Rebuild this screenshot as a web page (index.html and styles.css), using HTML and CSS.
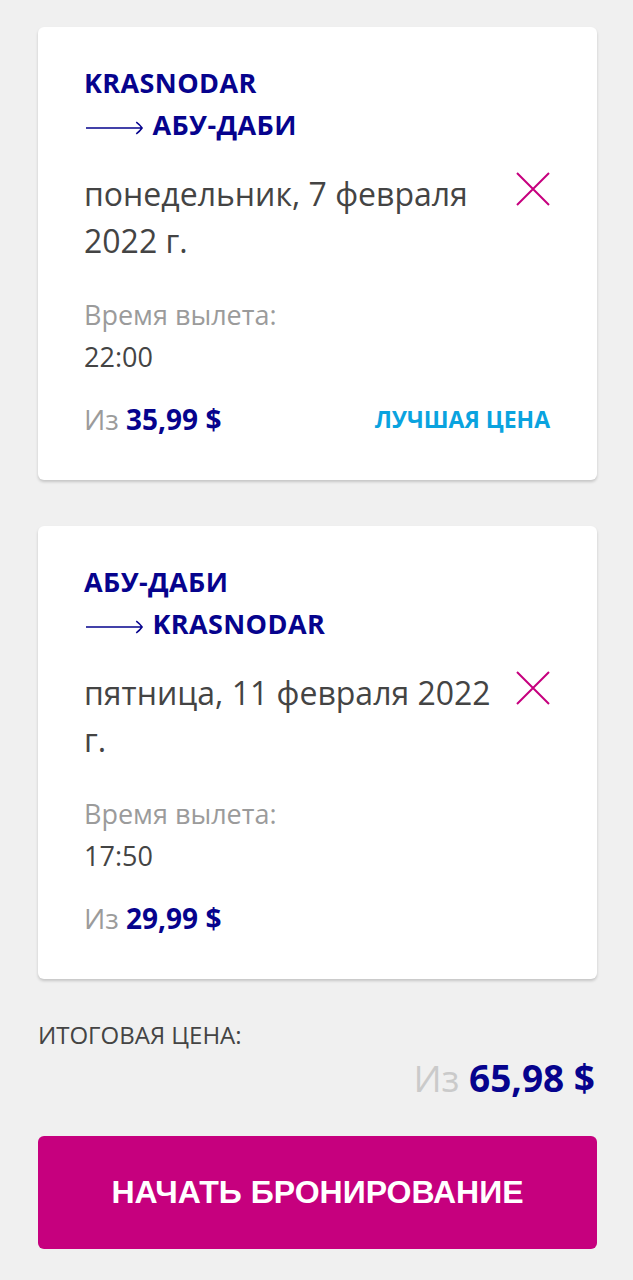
FILE: index.html
```html
<!DOCTYPE html>
<html lang="ru">
<head>
    <meta charset="UTF-8" />
    <meta name="viewport" content="width=device-width, initial-scale=1" />
    <title>Выбранные рейсы</title>
    <link rel="stylesheet" href="styles.css">
</head>
<body>
    <div class="flights">
        <div class="card">
            <div class="route">
                <div>KRASNODAR</div>
                <div><svg class="arrow" viewBox="0 0 60 16"><path d="M0 8 H58 M52 2 Q56 5 58 8 Q56 11 52 14" /></svg> АБУ-ДАБИ</div>
            </div>
            <div class="date-row">
                <div class="date">понедельник, 7 февраля 2022 г.</div>
                <svg class="remove" viewBox="0 0 34 34"><path d="M1 1 L33 33 M33 1 L1 33" /></svg>
            </div>
            <div class="label">Время вылета:</div>
            <div class="time">22:00</div>
            <div class="price-row">
                <div class="price"><span class="from">Из</span> <strong>35,99 $</strong></div>
                <div class="best">ЛУЧШАЯ ЦЕНА</div>
            </div>
        </div>

        <div class="card">
            <div class="route">
                <div>АБУ-ДАБИ</div>
                <div><svg class="arrow" viewBox="0 0 60 16"><path d="M0 8 H58 M52 2 Q56 5 58 8 Q56 11 52 14" /></svg> KRASNODAR</div>
            </div>
            <div class="date-row">
                <div class="date">пятница, 11 февраля 2022 г.</div>
                <svg class="remove" viewBox="0 0 34 34"><path d="M1 1 L33 33 M33 1 L1 33" /></svg>
            </div>
            <div class="label">Время вылета:</div>
            <div class="time">17:50</div>
            <div class="price-row">
                <div class="price"><span class="from">Из</span> <strong>29,99 $</strong></div>
            </div>
        </div>
    </div>

    <div class="summary">
        <div class="summary-label">ИТОГОВАЯ ЦЕНА:</div>
        <div class="summary-price"><span class="from">Из</span> <strong>65,98 $</strong></div>
    </div>

    <button class="book">НАЧАТЬ БРОНИРОВАНИЕ</button>
</body>
</html>
```

FILE: styles.css
```css
body {
    font-family: 'Open Sans', sans-serif;
    margin: 0;
    padding: 27px 36px 30px 38px;
    background: #f0f0f0;
    color: #444;
}
.flights {
    display: flex;
    flex-direction: column;
    gap: 46px;
}
.card {
    background: #fff;
    border-radius: 6px;
    box-shadow: 0 2px 3px rgba(0, 0, 0, 0.18);
    padding: 35px 47px 40px 46px;
}
.route {
    color: #06038d;
    font-size: 27px;
    font-weight: 700;
    line-height: 42px;
    letter-spacing: 0.4px;
}
.arrow {
    width: 58px;
    height: 16px;
    vertical-align: -1px;
    margin: 0 1px 0 2px;
}
.arrow path {
    fill: none;
    stroke: #06038d;
    stroke-width: 1.6;
}
.date-row {
    display: flex;
    justify-content: space-between;
    align-items: flex-start;
    gap: 10px;
    margin-top: 24px;
}
.date {
    font-size: 32px;
    line-height: 47px;
}
.remove {
    width: 34px;
    height: 34px;
    margin-top: 2px;
    flex-shrink: 0;
}
.remove path {
    stroke: #c6007e;
    stroke-width: 2;
}
.label {
    margin-top: 30px;
    font-size: 27px;
    line-height: 42px;
    color: #9b9b9b;
}
.time {
    font-size: 27px;
    line-height: 42px;
}
.price-row {
    display: flex;
    justify-content: space-between;
    align-items: center;
    margin-top: 20px;
    line-height: 42px;
}
.price {
    font-size: 28px;
}
.from {
    color: #9b9b9b;
}
.price strong, .summary-price strong {
    color: #06038d;
}
.best {
    color: #0aa3df;
    font-size: 23px;
    font-weight: 700;
}
.summary {
    margin-top: 41px;
}
.summary-label {
    font-size: 24px;
    line-height: 30px;
    color: #444;
}
.summary-price {
    margin-top: 5px;
    padding-right: 2px;
    text-align: right;
    font-size: 37px;
    line-height: 46px;
}
.summary-price .from {
    color: #cacaca;
}
.book {
    display: block;
    width: 100%;
    height: 113px;
    margin-top: 35px;
    background: #c6007e;
    color: #fff;
    border: none;
    border-radius: 6px;
    font-family: 'Liberation Sans', Arial, sans-serif;
    font-size: 32px;
    font-weight: 700;
    cursor: pointer;
}
```
